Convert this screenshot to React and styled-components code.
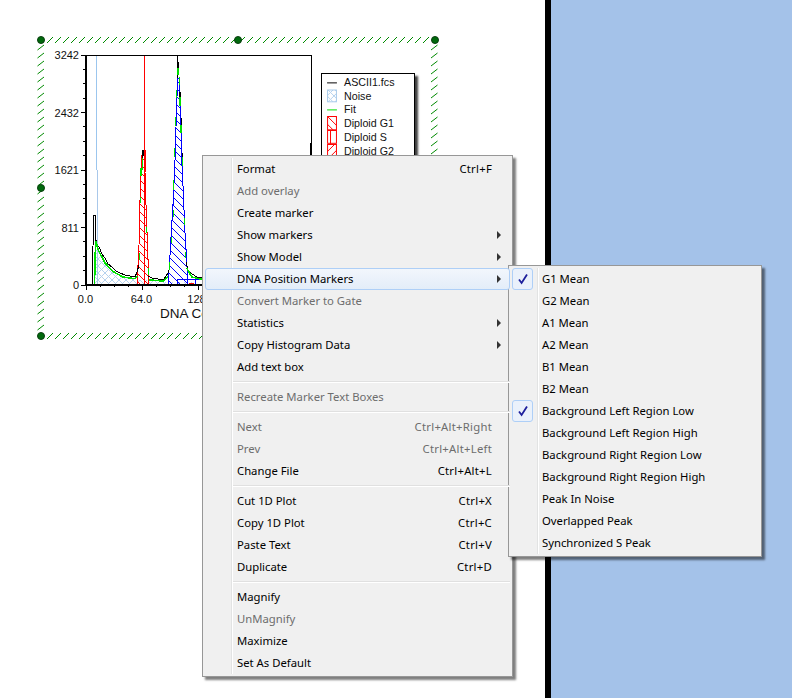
import React from 'react';
import styled, { createGlobalStyle } from 'styled-components';

const GlobalStyle = createGlobalStyle`
  html, body {
    margin: 0;
    padding: 0;
    background: #fff;
    overflow: hidden;
  }
`;

const mainMenu = [
  { label: 'Format', shortcut: 'Ctrl+F' },
  { label: 'Add overlay', disabled: true },
  { label: 'Create marker' },
  { label: 'Show markers', arrow: true },
  { label: 'Show Model', arrow: true },
  { label: 'DNA Position Markers', arrow: true, active: true },
  { label: 'Convert Marker to Gate', disabled: true },
  { label: 'Statistics', arrow: true },
  { label: 'Copy Histogram Data', arrow: true },
  { label: 'Add text box' },
  { separator: true },
  { label: 'Recreate Marker Text Boxes', disabled: true },
  { separator: true },
  { label: 'Next', shortcut: 'Ctrl+Alt+Right', disabled: true },
  { label: 'Prev', shortcut: 'Ctrl+Alt+Left', disabled: true },
  { label: 'Change File', shortcut: 'Ctrl+Alt+L' },
  { separator: true },
  { label: 'Cut 1D Plot', shortcut: 'Ctrl+X' },
  { label: 'Copy 1D Plot', shortcut: 'Ctrl+C' },
  { label: 'Paste Text', shortcut: 'Ctrl+V' },
  { label: 'Duplicate', shortcut: 'Ctrl+D' },
  { separator: true },
  { label: 'Magnify' },
  { label: 'UnMagnify', disabled: true },
  { label: 'Maximize' },
  { label: 'Set As Default' },
];

const subMenu = [
  { label: 'G1 Mean', checked: true },
  { label: 'G2 Mean' },
  { label: 'A1 Mean' },
  { label: 'A2 Mean' },
  { label: 'B1 Mean' },
  { label: 'B2 Mean' },
  { label: 'Background Left Region Low', checked: true },
  { label: 'Background Left Region High' },
  { label: 'Background Right Region Low' },
  { label: 'Background Right Region High' },
  { label: 'Peak In Noise' },
  { label: 'Overlapped Peak' },
  { label: 'Synchronized S Peak' },
];

const legendRows = [
  { label: 'ASCII1.fcs', kind: 'black' },
  { label: 'Noise', kind: 'noise' },
  { label: 'Fit', kind: 'fit' },
  { label: 'Diploid G1', kind: 'g1' },
  { label: 'Diploid S', kind: 's' },
  { label: 'Diploid G2', kind: 'g2' },
];

// chart outlines, in page pixels
const noiseArea = '95,285 96,241 98,250 105,263 113,272 123,277 135,279 160,282 190,282 200,285';
const redPeak = '137,285 139,245 140,200 141,172 142,155 143,150 145,150 145,172 146,205 147.5,245 149,285';
const bluePeak = '168,285 169.7,260 171.7,225 173.3,200 175,160 176.5,110 177.7,78 179,78 180.5,110 181.7,160 183.7,200 184.5,225 186.7,260 188,285';
const fitLeft = '94.5,285 95,262 95.7,241 98.3,250 105,263 113.3,271.7 123,277 135,278.7 137,276';
const fitMiddle = '149.3,280 163,281 168,277';
const fitRight = '186.7,268 191.7,277 201.7,279.3';
const dataLeft = '92.5,285 93,246 94,215 95,215 95,240 96,240 97,246 99,247 102,254 105,258 108,264 112,267 116,271 120,273 125,275 130,276 135,277 137,272 139,265';
const dataMiddle = '148,276 152,278 158,279 164,279 168,273 170,267';
const dataRight = '186,262 188,270 192,274 197,277 202,278';

const fitDashes = [
  [178, 68, 75], [179.3, 77, 85], [176.7, 90, 98], [180, 97, 106], [175.7, 117, 126], [181, 125, 133],
  [174.7, 148, 157], [182.3, 157, 166], [173.3, 180, 190], [173.7, 210, 217], [184.3, 218, 225],
  [171.7, 237, 243], [185.3, 252, 258], [169.5, 262, 270], [140.3, 197, 203], [146.3, 227, 233],
  [139.3, 253, 260], [148.3, 268, 275], [142.5, 158, 170], [141, 168, 176],
];

const dataDashes = [
  [177.7, 55, 62], [178.3, 62, 68], [180, 92, 97], [181.5, 118, 125], [182.3, 153, 157], [142.5, 150, 158], [143.7, 150, 156],
];

const range = (from, to, step) => {
  const out = [];
  for (let v = from; v <= to; v += step) out.push(v);
  return out;
};

const Workspace = styled.div`
  display: flex;
  width: 792px;
  height: 698px;
  position: relative;
  overflow: hidden;
`;

const WhitePane = styled.div`
  width: 545px;
  background: #fff;
  position: relative;
`;

const Divider = styled.div`
  width: 6px;
  background: #000;
`;

const BluePane = styled.div`
  flex: 1;
  background: #a4c2e9;
`;

const PlotSvg = styled.svg`
  position: absolute;
  left: 0;
  top: 0;
  display: block;
  shape-rendering: crispEdges;
`;

const AxisText = styled.text`
  font-family: 'Liberation Sans', Arial, sans-serif;
  font-size: ${(p) => p.$size || 11}px;
  fill: #111;
`;

const Legend = styled.div`
  position: absolute;
  left: 321px;
  top: 73px;
  width: 92px;
  height: 110px;
  padding-top: 1px;
  background: #fff;
  border: 1px solid #000;
  box-shadow: 3px 3px 2px rgba(0, 0, 0, 0.75);
`;

const LegendRow = styled.div`
  display: flex;
  align-items: center;
  gap: 6px;
  height: 13.8px;
  padding-left: 5px;
  font-family: 'Liberation Sans', Arial, sans-serif;
  font-size: 10.7px;
  color: #111;
`;

const Menu = styled.div`
  position: absolute;
  left: ${(p) => p.$left}px;
  top: ${(p) => p.$top}px;
  width: ${(p) => p.$width}px;
  box-sizing: border-box;
  padding: 2px;
  background: #f0f0f0;
  border: 1px solid #979797;
  box-shadow: 3px 3px 2px rgba(0, 0, 0, 0.5);
  font-family: 'Noto Sans', 'Open Sans', sans-serif;
  font-size: 11.3px;
  color: #000;

  &::before {
    content: '';
    position: absolute;
    left: 28px;
    top: 2px;
    bottom: 2px;
    width: 1px;
    background: #e2e3e3;
    box-shadow: 1px 0 0 #fff;
  }
`;

const Row = styled.div`
  position: relative;
  z-index: 1;
  display: flex;
  align-items: center;
  height: 22px;
  box-sizing: border-box;
  padding-left: ${(p) => p.$textLeft}px;
  padding-right: 17px;
  padding-bottom: 2px;
  border: 1px solid ${(p) => (p.$active ? '#aecff7' : 'transparent')};
  border-radius: 3px;
  background: ${(p) => (p.$active ? 'linear-gradient(#f2f6fc, #e3edf9)' : 'transparent')};
  color: ${(p) => (p.$disabled ? '#6d6d6d' : '#000')};
  white-space: nowrap;
`;

const Label = styled.span`
  flex: 1;
`;

const Shortcut = styled.span`
  text-align: right;
  letter-spacing: 0.25px;
`;

const Arrow = styled.span`
  position: absolute;
  right: 8px;
  top: 6px;
  width: 0;
  height: 0;
  border-top: 4px solid transparent;
  border-bottom: 4px solid transparent;
  border-left: 4px solid #333;
`;

const Separator = styled.div`
  position: relative;
  z-index: 1;
  height: 1px;
  margin: 3px 0 4px 28px;
  background: #e0e0e0;
  box-shadow: 0 1px 0 #fff;
`;

const CheckBox = styled.span`
  position: absolute;
  left: 0;
  top: -1px;
  width: 21px;
  height: 22px;
  box-sizing: border-box;
  display: flex;
  align-items: center;
  justify-content: center;
  background: #eaf1fb;
  border: 1px solid #aecff7;
  border-radius: 3px;
`;

function LegendSwatch({ kind }) {
  return (
    <svg width="11" height="13.8" viewBox="0 0 11 14">
      {kind === 'black' && <line x1="0" y1="8" x2="10" y2="8" stroke="#000" />}
      {kind === 'fit' && <line x1="0" y1="7" x2="10" y2="7" stroke="#00e000" />}
      {kind === 'noise' && <rect x="0.5" y="1" width="9" height="12" fill="url(#noiseHatch)" stroke="#a9cbea" />}
      {kind === 'g1' && <rect x="0.5" y="0.5" width="9" height="13.5" fill="url(#redHatch)" stroke="#f00" />}
      {kind === 's' && (
        <>
          <rect x="0.5" y="0.5" width="9" height="13" fill="#fff" stroke="#f00" />
          <line x1="3.5" y1="0" x2="3.5" y2="14" stroke="#f00" />
        </>
      )}
      {kind === 'g2' && <rect x="0.5" y="0.5" width="9" height="13.5" fill="url(#redHatchUp)" stroke="#f00" />}
    </svg>
  );
}

function PlotChart() {
  return (
    <PlotSvg width="480" height="350" viewBox="0 0 480 350">
      <defs>
        <pattern id="noiseHatch" width="7" height="7" patternUnits="userSpaceOnUse">
          <path d="M0 0L7 7M7 0L0 7" stroke="#b5d2ee" strokeWidth="1" fill="none" />
        </pattern>
        <pattern id="redHatch" width="8" height="8" patternUnits="userSpaceOnUse">
          <path d="M0 0L8 8" stroke="#f00" strokeWidth="1" fill="none" />
        </pattern>
        <pattern id="redHatchUp" width="8" height="8" patternUnits="userSpaceOnUse">
          <path d="M0 8L8 0" stroke="#f00" strokeWidth="1" fill="none" />
        </pattern>
        <pattern id="blueHatch" width="8" height="8" patternUnits="userSpaceOnUse">
          <path d="M0 0L8 8" stroke="#00f" strokeWidth="1" fill="none" />
        </pattern>
      </defs>

      {/* selection frame */}
      <g stroke="#008a00" strokeWidth="1" shapeRendering="auto">
        {range(47, 427, 8).map((x) => (
          <React.Fragment key={x}>
            <line x1={x} y1="43" x2={x + 6} y2="37" />
            <line x1={x} y1="339" x2={x + 6} y2="333" />
          </React.Fragment>
        ))}
        {range(45, 328, 8).map((y) => (
          <React.Fragment key={y}>
            <line x1="37.5" y1={y + 5} x2="44" y2={y} />
            <line x1="431" y1={y + 5} x2="437.5" y2={y} />
          </React.Fragment>
        ))}
      </g>
      <g fill="#006a0c" stroke="#0a3d10" strokeWidth="1" shapeRendering="auto">
        {[[41, 40], [238, 40], [435, 40], [41, 188], [435, 188], [41, 336], [238, 336], [435, 336]].map(([cx, cy]) => (
          <circle key={`${cx}-${cy}`} cx={cx} cy={cy} r="3.5" />
        ))}
      </g>

      {/* plot area */}
      <polygon points={noiseArea} fill="url(#noiseHatch)" />
      <line x1="96.5" y1="55" x2="96.5" y2="170" stroke="#9cc6ee" />
      <line x1="97.5" y1="170" x2="97.5" y2="285" stroke="#a9c8ea" />
      <polygon points={bluePeak} fill="url(#blueHatch)" stroke="#00f" strokeWidth="1" />
      <path d="M177 284V279H202M187 279V284M195 279V284" fill="none" stroke="#00f" strokeWidth="1" />
      <line x1="177.7" y1="78" x2="177.7" y2="55" stroke="#000" />
      <polygon points={redPeak} fill="url(#redHatch)" stroke="#f00" strokeWidth="1" />
      <line x1="189" y1="284" x2="194" y2="284" stroke="#f00" strokeWidth="2" />

      <g fill="none" stroke="#000" strokeWidth="1">
        <polyline points={dataLeft} />
        <polyline points={dataMiddle} />
        <polyline points={dataRight} />
      </g>
      <g fill="none" stroke="#00e000" strokeWidth="1.6">
        <polyline points={fitLeft} />
        <polyline points={fitMiddle} />
        <polyline points={fitRight} />
      </g>
      {dataDashes.map(([x, y1, y2]) => (
        <line key={`d${x}-${y1}`} x1={x} y1={y1} x2={x} y2={y2} stroke="#000" strokeWidth="1.5" />
      ))}
      {fitDashes.map(([x, y1, y2]) => (
        <line key={`f${x}-${y1}`} x1={x} y1={y1} x2={x} y2={y2} stroke="#00e000" strokeWidth="1.5" />
      ))}
      <line x1="144.5" y1="55" x2="144.5" y2="285" stroke="#f00" strokeWidth="1" />

      {/* axes */}
      <line x1="85" y1="55" x2="312" y2="55" stroke="#000" strokeWidth="1" />
      <line x1="311.5" y1="55" x2="311.5" y2="285" stroke="#000" strokeWidth="1" />
      <line x1="311" y1="143" x2="311" y2="160" stroke="#000" strokeWidth="2" />
      <line x1="86" y1="55" x2="86" y2="286" stroke="#000" strokeWidth="2" />
      <line x1="85" y1="285" x2="312" y2="285" stroke="#000" strokeWidth="2" />
      {range(0, 16, 1).map((i) => {
        const y = 55 + i * 14.375;
        return <line key={i} x1={i % 4 === 0 ? 81 : 83} y1={y} x2="85" y2={y} stroke="#000" />;
      })}
      {range(0, 16, 1).map((i) => {
        const x = 86.7 + i * 14;
        return <line key={i} x1={x} y1="286" x2={x} y2={i % 4 === 0 ? 290 : 287} stroke="#000" />;
      })}

      <AxisText x="79" y="59" textAnchor="end">3242</AxisText>
      <AxisText x="79" y="117" textAnchor="end">2432</AxisText>
      <AxisText x="79" y="174" textAnchor="end">1621</AxisText>
      <AxisText x="79" y="232" textAnchor="end">811</AxisText>
      <AxisText x="79" y="289" textAnchor="end">0</AxisText>
      <AxisText x="85.5" y="303" textAnchor="middle">0.0</AxisText>
      <AxisText x="141.5" y="303" textAnchor="middle">64.0</AxisText>
      <AxisText x="196.5" y="303" textAnchor="middle">128</AxisText>
      <AxisText x="160" y="318" $size={13.5}>DNA Content</AxisText>
    </PlotSvg>
  );
}

function MenuRows({ items, textLeft }) {
  return items.map((item, i) =>
    item.separator ? (
      <Separator key={i} />
    ) : (
      <Row key={i} $textLeft={textLeft} $disabled={item.disabled} $active={item.active}>
        {item.checked && (
          <CheckBox>
            <svg width="12" height="12" viewBox="0 0 12 12">
              <path d="M2 6.5L4.6 10L10 1.5" fill="none" stroke="#1d1f9c" strokeWidth="1.8" />
            </svg>
          </CheckBox>
        )}
        <Label>{item.label}</Label>
        {item.shortcut && <Shortcut>{item.shortcut}</Shortcut>}
        {item.arrow && <Arrow />}
      </Row>
    )
  );
}

export default function App() {
  return (
    <>
      <GlobalStyle />
      <Workspace>
        <WhitePane>
          <PlotChart />
          <Legend>
            {legendRows.map((row) => (
              <LegendRow key={row.label}>
                <LegendSwatch kind={row.kind} />
                {row.label}
              </LegendRow>
            ))}
          </Legend>
        </WhitePane>
        <Divider />
        <BluePane />
        <Menu $left={202} $top={155} $width={311}>
          <MenuRows items={mainMenu} textLeft={31} />
        </Menu>
        <Menu $left={508} $top={265} $width={254}>
          <MenuRows items={subMenu} textLeft={30} />
        </Menu>
      </Workspace>
    </>
  );
}
